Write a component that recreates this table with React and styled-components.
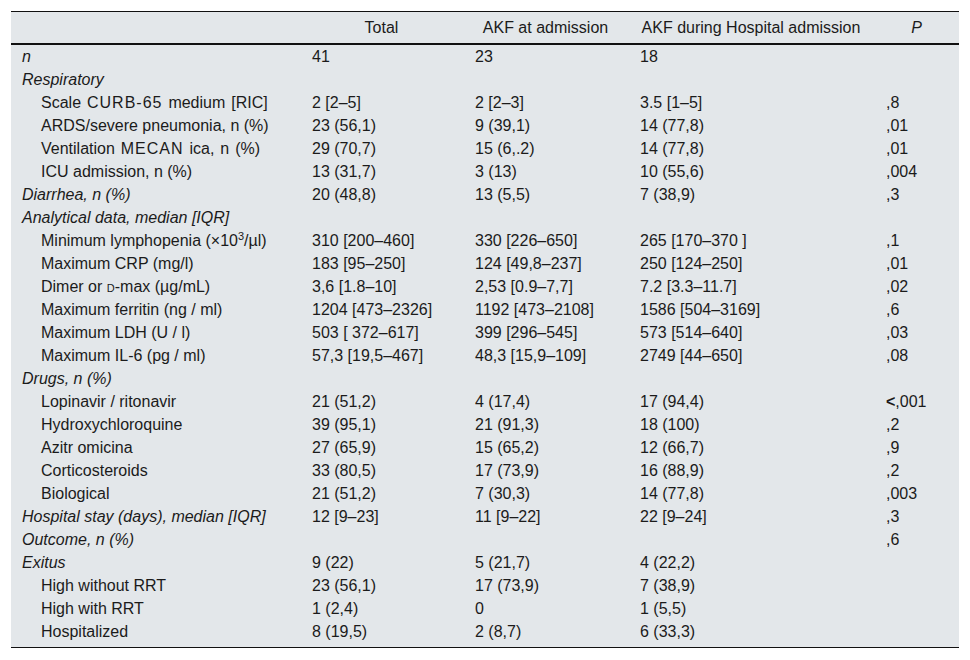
import styled, { createGlobalStyle } from "styled-components";

const GlobalStyle = createGlobalStyle`
  body {
    margin: 0;
    background: #ffffff;
    font-family: "Liberation Sans", Arial, sans-serif;
    color: #1b1b1b;
  }
`;

const Page = styled.div`
  padding: 11px;
`;

const Table = styled.table`
  width: 948px;
  table-layout: fixed;
  border-collapse: collapse;
  background-color: #e3e7ea;
  font-size: 16px;
  border-top: 1px solid #111;
  border-bottom: 1px solid #111;
`;

const Th = styled.th`
  height: 31px;
  padding: 0 12px;
  font-weight: 400;
  font-style: ${(p) => (p.$italic ? "italic" : "normal")};
  text-align: center;
  vertical-align: middle;
  border-bottom: 2px solid #111;
  white-space: nowrap;
`;

const Row = styled.tr`
  td {
    height: 23px;
    padding-top: 0;
    padding-bottom: ${(p) => (p.$last ? "4px" : "0")};
    vertical-align: ${(p) => (p.$last ? "top" : "middle")};
    line-height: 23px;
    white-space: nowrap;
  }
`;

const Label = styled.td`
  padding-left: ${(p) => (p.$head ? "11px" : "30px")};
  font-style: ${(p) => (p.$head ? "italic" : "normal")};

  sup {
    font-size: 11px;
    line-height: 0;
    vertical-align: 6px;
  }
`;

const Cell = styled.td`
  padding-left: 12px;
`;

const SmallCaps = styled.span`
  font-variant: small-caps;
`;

// the acronyms set a little looser in the source
const Loose = styled.span`
  word-spacing: 1.5px;

  b {
    font-weight: 400;
    letter-spacing: 1px;
  }
`;

const Lt = styled.span`
  font-weight: 700;
`;

const rows = [
  { label: "n", kind: "head", vals: ["41", "23", "18", ""] },
  { label: "Respiratory", kind: "head", vals: null },
  {
    label: (
      <Loose>
        Scale <b>CURB-65</b> medium [RIC]
      </Loose>
    ),
    vals: ["2 [2–5]", "2 [2–3]", "3.5 [1–5]", ",8"],
  },
  { label: "ARDS/severe pneumonia, n (%)", vals: ["23 (56,1)", "9 (39,1)", "14 (77,8)", ",01"] },
  {
    label: (
      <Loose>
        Ventilation <b>MECAN</b> ica, n (%)
      </Loose>
    ),
    vals: ["29 (70,7)", "15 (6,.2)", "14 (77,8)", ",01"],
  },
  { label: "ICU admission, n (%)", vals: ["13 (31,7)", "3 (13)", "10 (55,6)", ",004"] },
  { label: "Diarrhea, n (%)", kind: "head", vals: ["20 (48,8)", "13 (5,5)", "7 (38,9)", ",3"] },
  { label: "Analytical data, median [IQR]", kind: "head", vals: null },
  {
    label: (
      <>
        Minimum lymphopenia (×10<sup>3</sup>/µl)
      </>
    ),
    vals: ["310 [200–460]", "330 [226–650]", "265 [170–370 ]", ",1"],
  },
  { label: "Maximum CRP (mg/l)", vals: ["183 [95–250]", "124 [49,8–237]", "250 [124–250]", ",01"] },
  {
    label: (
      <>
        Dimer or <SmallCaps>d</SmallCaps>-max (µg/mL)
      </>
    ),
    vals: ["3,6 [1.8–10]", "2,53 [0.9–7,7]", "7.2 [3.3–11.7]", ",02"],
  },
  { label: "Maximum ferritin (ng / ml)", vals: ["1204 [473–2326]", "1192 [473–2108]", "1586 [504–3169]", ",6"] },
  { label: "Maximum LDH (U / l)", vals: ["503 [ 372–617]", "399 [296–545]", "573 [514–640]", ",03"] },
  { label: "Maximum IL-6 (pg / ml)", vals: ["57,3 [19,5–467]", "48,3 [15,9–109]", "2749 [44–650]", ",08"] },
  { label: "Drugs, n (%)", kind: "head", vals: null },
  {
    label: "Lopinavir / ritonavir",
    vals: [
      "21 (51,2)",
      "4 (17,4)",
      "17 (94,4)",
      <>
        <Lt>&lt;</Lt>,001
      </>,
    ],
  },
  { label: "Hydroxychloroquine", vals: ["39 (95,1)", "21 (91,3)", "18 (100)", ",2"] },
  { label: "Azitr omicina", vals: ["27 (65,9)", "15 (65,2)", "12 (66,7)", ",9"] },
  { label: "Corticosteroids", vals: ["33 (80,5)", "17 (73,9)", "16 (88,9)", ",2"] },
  { label: "Biological", vals: ["21 (51,2)", "7 (30,3)", "14 (77,8)", ",003"] },
  { label: "Hospital stay (days), median [IQR]", kind: "head", vals: ["12 [9–23]", "11 [9–22]", "22 [9–24]", ",3"] },
  { label: "Outcome, n (%)", kind: "head", vals: ["", "", "", ",6"] },
  { label: "Exitus", kind: "head", vals: ["9 (22)", "5 (21,7)", "4 (22,2)", ""] },
  { label: "High without RRT", vals: ["23 (56,1)", "17 (73,9)", "7 (38,9)", ""] },
  { label: "High with RRT", vals: ["1 (2,4)", "0", "1 (5,5)", ""] },
  { label: "Hospitalized", vals: ["8 (19,5)", "2 (8,7)", "6 (33,3)", ""] },
];

const App = () => {
  return (
    <Page>
      <GlobalStyle />
      <Table>
        <colgroup>
          <col style={{ width: 289 }} />
          <col style={{ width: 163 }} />
          <col style={{ width: 165 }} />
          <col style={{ width: 246 }} />
          <col style={{ width: 85 }} />
        </colgroup>
        <thead>
          <tr>
            <Th />
            <Th>Total</Th>
            <Th>AKF at admission</Th>
            <Th>AKF during Hospital admission</Th>
            <Th $italic>P</Th>
          </tr>
        </thead>
        <tbody>
          {rows.map((row, i) => (
            <Row key={i} $last={i === rows.length - 1}>
              <Label $head={row.kind === "head"}>{row.label}</Label>
              {(row.vals || ["", "", "", ""]).map((v, j) => (
                <Cell key={j}>{v}</Cell>
              ))}
            </Row>
          ))}
        </tbody>
      </Table>
    </Page>
  );
};

export default App;
